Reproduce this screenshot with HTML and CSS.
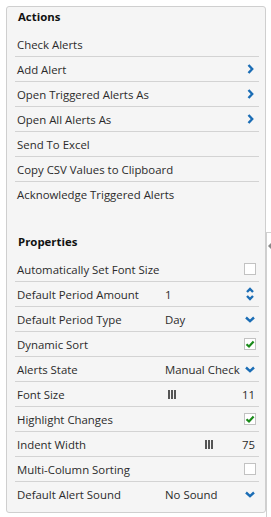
FILE: index.html
```html
<!DOCTYPE html>
<html lang="en">
  <head>
    <meta charset="UTF-8" />
    <meta name="viewport" content="width=device-width, initial-scale=1.0" />
    <title>Alerts Settings</title>
    <link rel="stylesheet" href="styles.css">
  </head>
  <body>
    <div class="panel">
      <section class="group">
        <h2 class="group-title">Actions</h2>
        <ul class="rows">
          <li class="row"><span class="label">Check Alerts</span></li>
          <li class="row"><span class="label">Add Alert</span><span class="icon"><svg width="7" height="10" viewBox="0 0 7 10"><path d="M1.5 1 L5.2 5 L1.5 9" /></svg></span></li>
          <li class="row"><span class="label">Open Triggered Alerts As</span><span class="icon"><svg width="7" height="10" viewBox="0 0 7 10"><path d="M1.5 1 L5.2 5 L1.5 9" /></svg></span></li>
          <li class="row"><span class="label">Open All Alerts As</span><span class="icon"><svg width="7" height="10" viewBox="0 0 7 10"><path d="M1.5 1 L5.2 5 L1.5 9" /></svg></span></li>
          <li class="row"><span class="label">Send To Excel</span></li>
          <li class="row"><span class="label">Copy CSV Values to Clipboard</span></li>
          <li class="row last"><span class="label">Acknowledge Triggered Alerts</span></li>
        </ul>
      </section>
      <section class="group props">
        <h2 class="group-title">Properties</h2>
        <ul class="rows">
          <li class="row"><span class="label">Automatically Set Font Size</span><span class="value"></span><span class="check"></span></li>
          <li class="row"><span class="label">Default Period Amount</span><span class="value">1</span><span class="icon"><svg width="8" height="14" viewBox="0 0 8 14"><path d="M1 5 L4 2 L7 5 M1 9 L4 12 L7 9" /></svg></span></li>
          <li class="row"><span class="label">Default Period Type</span><span class="value">Day</span><span class="icon"><svg width="10" height="7" viewBox="0 0 10 7"><path d="M1 1.5 L5 5.2 L9 1.5" /></svg></span></li>
          <li class="row"><span class="label">Dynamic Sort</span><span class="value"></span><span class="check on"><svg width="10" height="10" viewBox="0 0 10 10"><path d="M1.5 5.2 L4 7.5 L8.6 2.6" /></svg></span></li>
          <li class="row"><span class="label">Alerts State</span><span class="value">Manual Check</span><span class="icon"><svg width="10" height="7" viewBox="0 0 10 7"><path d="M1 1.5 L5 5.2 L9 1.5" /></svg></span></li>
          <li class="row"><span class="label">Font Size</span><span class="value slider"><span class="grip" style="margin-left: 3px"><i></i><i></i><i></i></span></span><span class="num">11</span></li>
          <li class="row"><span class="label">Highlight Changes</span><span class="value"></span><span class="check on"><svg width="10" height="10" viewBox="0 0 10 10"><path d="M1.5 5.2 L4 7.5 L8.6 2.6" /></svg></span></li>
          <li class="row"><span class="label">Indent Width</span><span class="value slider"><span class="grip" style="margin-left: 40px"><i></i><i></i><i></i></span></span><span class="num">75</span></li>
          <li class="row"><span class="label">Multi-Column Sorting</span><span class="value"></span><span class="check"></span></li>
          <li class="row last"><span class="label">Default Alert Sound</span><span class="value">No Sound</span><span class="icon"><svg width="10" height="7" viewBox="0 0 10 7"><path d="M1 1.5 L5 5.2 L9 1.5" /></svg></span></li>
        </ul>
      </section>
    </div>
    <div class="splitter"><span class="arrow"></span></div>
  </body>
</html>
```

FILE: styles.css
```css
body {
  margin: 0;
  padding: 6px;
  background: #ffffff;
  font-family: "Open Sans", Arial, sans-serif;
  font-size: 11.4px;
  color: #2b2b2b;
}
.panel {
  width: 258px;
  height: 505px;
  border: 1px solid #cfcfcf;
  border-radius: 3px;
  background: #f5f5f5;
  box-sizing: content-box;
}
.group-title {
  margin: 0;
  height: 25px;
  line-height: 20px;
  padding-left: 11px;
  font-size: 11.4px;
  font-weight: bold;
  color: #111111;
}
.props {
  margin-top: 25px;
}
.rows {
  list-style: none;
  margin: 0 6px 0 8px;
  padding: 0;
}
.row {
  display: grid;
  grid-template-columns: 148px 1fr auto;
  align-items: center;
  height: 25px;
  padding: 0 3px 0 2px;
  border-bottom: 1px solid #d3d3d3;
  box-sizing: border-box;
}
.row.last {
  border-bottom: none;
}
.label {
  grid-column: 1;
  white-space: nowrap;
}
.value {
  grid-column: 2;
  white-space: nowrap;
}
.icon,
.check,
.num {
  grid-column: 3;
  justify-self: end;
}
.icon {
  display: flex;
  align-items: center;
  justify-content: center;
  width: 12px;
}
.icon svg path {
  fill: none;
  stroke: #1b6db5;
  stroke-width: 2.4;
}
.check {
  display: flex;
  align-items: center;
  justify-content: center;
  width: 10px;
  height: 10px;
  border: 1px solid #c2c2c2;
  background: #ffffff;
}
.check svg path {
  fill: none;
  stroke: #1a8a1a;
  stroke-width: 2.2;
}
.num {
  padding-right: 1px;
}
.slider {
  display: flex;
  align-items: center;
}
.grip {
  display: flex;
  gap: 1px;
}
.grip i {
  display: block;
  width: 2px;
  height: 9px;
  background: #555555;
}
.splitter {
  position: absolute;
  left: 266px;
  top: 232px;
  width: 5px;
  height: 285px;
  border-top: 1px solid #d0d0d0;
  border-left: 1px solid #d0d0d0;
  box-sizing: border-box;
}
.arrow {
  position: absolute;
  left: 1px;
  top: 10px;
  width: 0;
  height: 0;
  border-top: 3px solid transparent;
  border-bottom: 3px solid transparent;
  border-right: 3px solid #8a8a8a;
}
```
